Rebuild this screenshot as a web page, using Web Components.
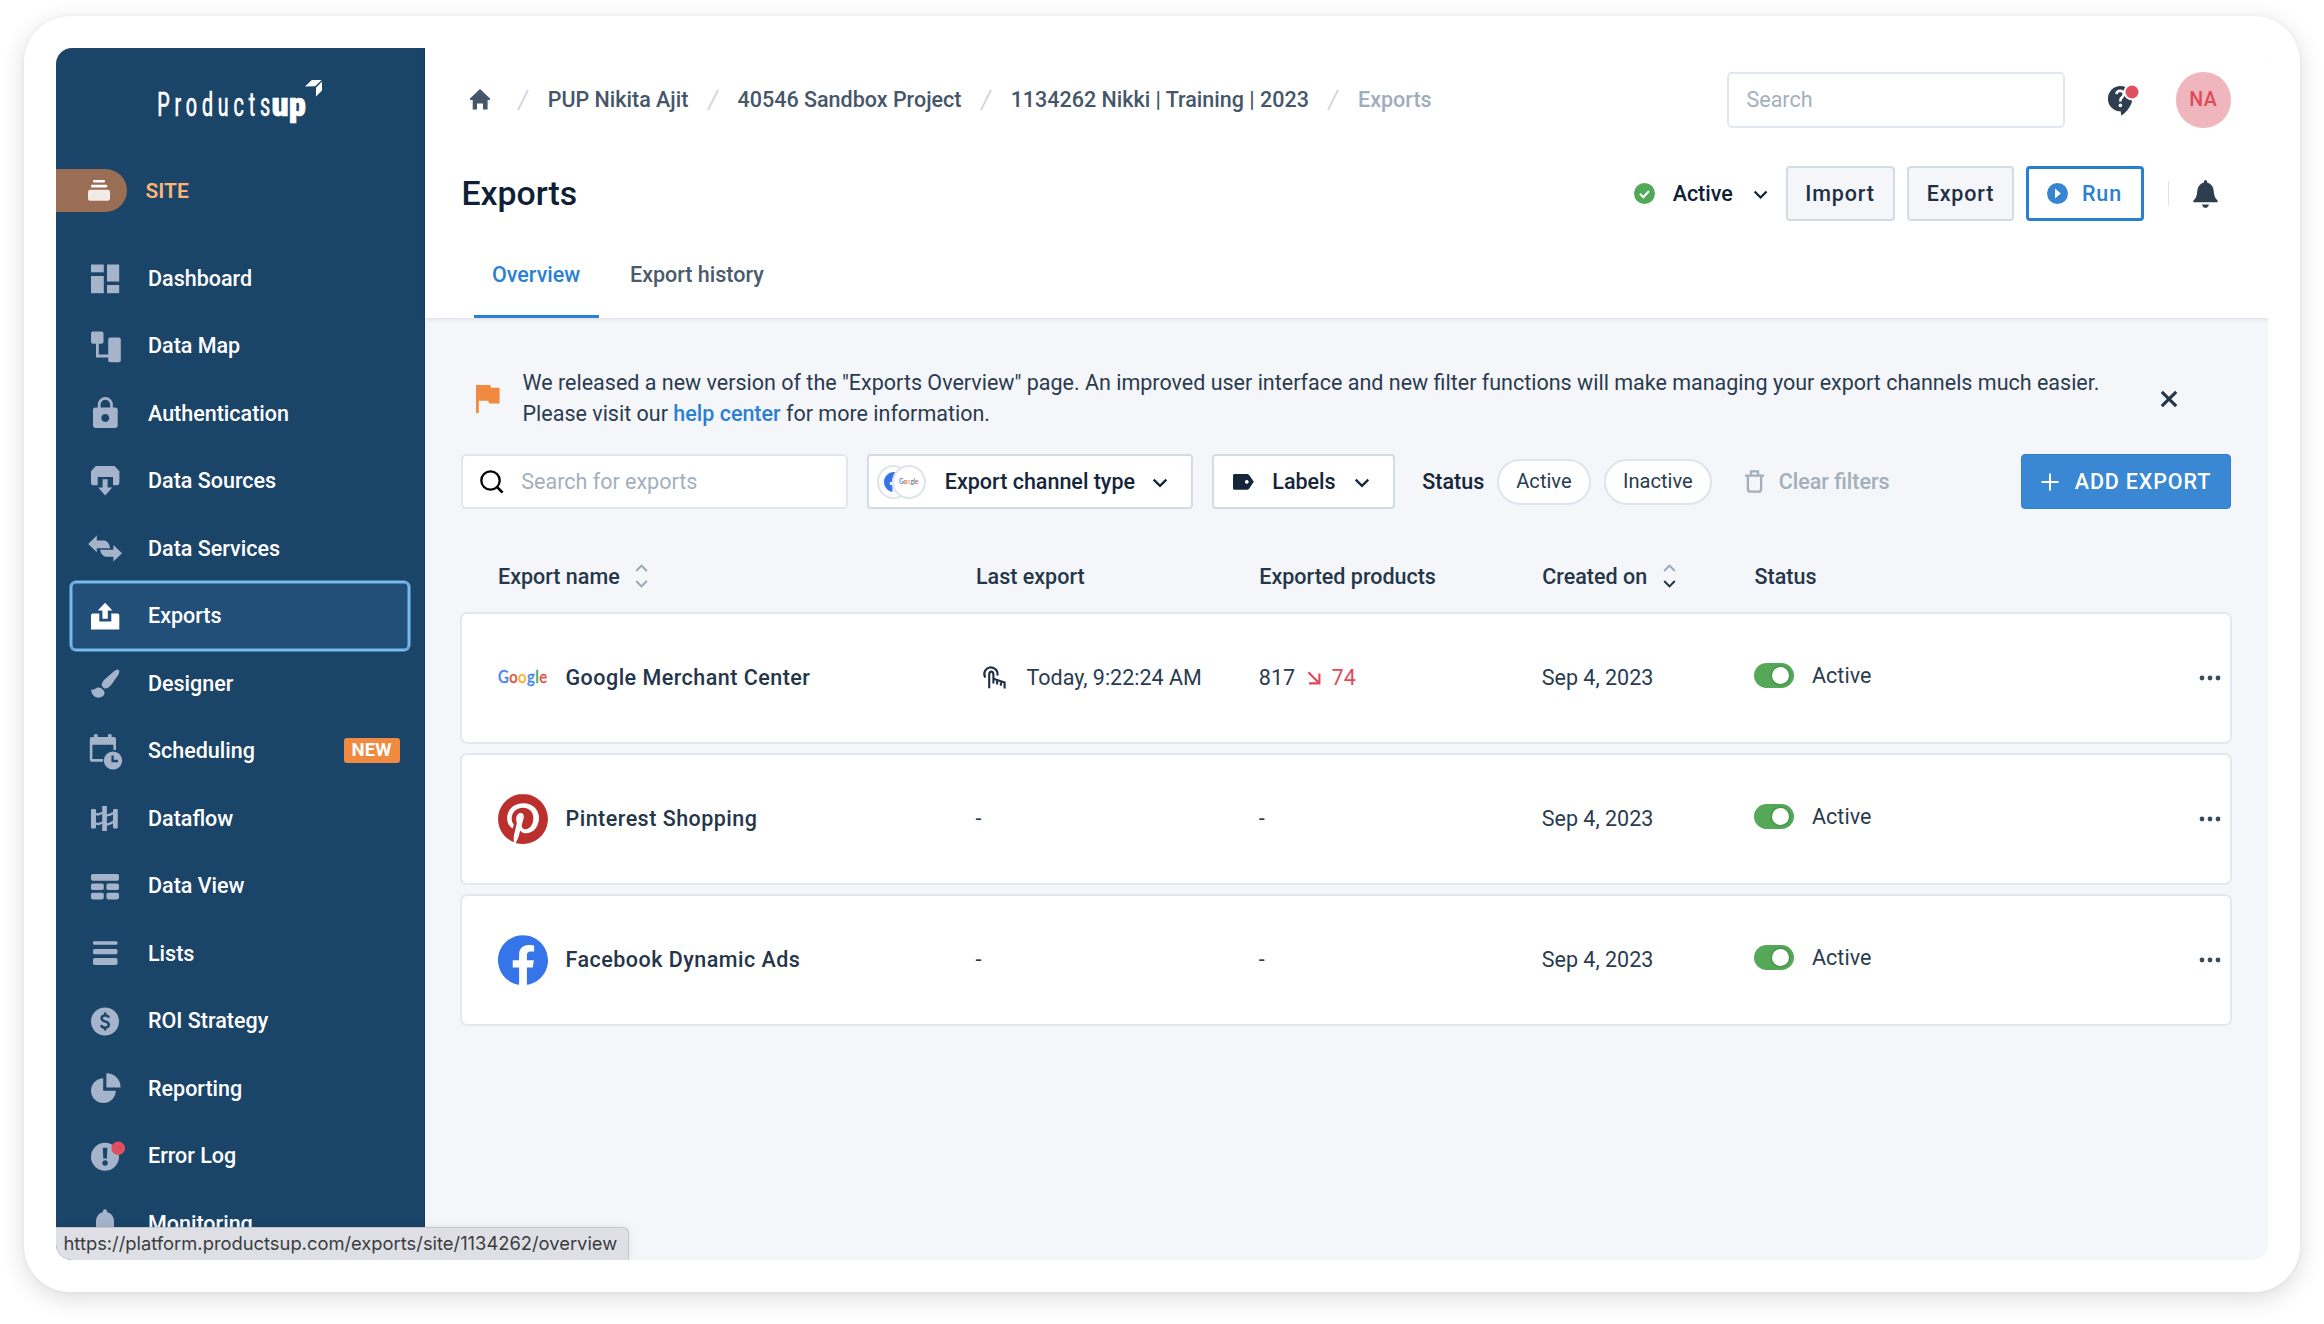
<!DOCTYPE html>
<html lang="en">
<head>
<meta charset="utf-8">
<title>Exports</title>
<style>
  html, body { margin: 0; width: 2324px; height: 1324px; overflow: hidden; background: #fff; }
  body { font: 400 21.5px/31px Roboto, "Liberation Sans", sans-serif; color: #2a3b4f; }
</style>
</head>
<body>
<pu-window></pu-window>

<script>
/* Base class: renders a template string into an open shadow root. */
class PuElement extends HTMLElement {
  connectedCallback() {
    if (this.shadowRoot) return;
    this.attachShadow({ mode: 'open' });
    this.shadowRoot.innerHTML =
      '<style>:host,*{box-sizing:border-box}svg{display:block;flex:none}' + this.css() + '</style>' + this.html();
  }
  css() { return ''; }
  html() { return '<slot></slot>'; }
}

/* Icon set: [width, height, viewBox, markup] */
const ICONS = {
  dashboard: [36, 36, '0 0 36 36', '<rect x="4" y="4.5" width="12.8" height="7.8"/><rect x="4" y="16" width="12.8" height="17.2"/><rect x="20" y="4.5" width="12.2" height="17"/><rect x="20" y="25" width="12.2" height="8.2"/>'],
  map: [36, 36, '0 0 36 36', '<rect x="4" y="3.5" width="12.5" height="12.3" rx="2"/><rect x="21.2" y="9.5" width="12.6" height="24.7" rx="2"/><path d="M10.4 15V28H22" fill="none" stroke="currentColor" stroke-width="2.8"/>'],
  lock: [36, 36, '0 0 36 36', '<path fill-rule="evenodd" d="M8.5 12.5H28.2Q30.7 12.5 30.7 15V30.6Q30.7 33 28.2 33H8.5Q6 33 6 30.6V15Q6 12.5 8.5 12.5ZM18.3 19a4 4 0 1 0 .01 0Z"/><path d="M12.2 13.5V9.6a6.1 6.1 0 0 1 12.3 0V13.5" fill="none" stroke="currentColor" stroke-width="2.7"/>'],
  sources: [36, 36, '0 0 36 36', '<path d="M8.8 3H27.6L32.4 8.3V20Q32.4 21.8 30.5 22.2H26V14H10.7V22.2H6Q4 21.8 4 20V8.3Z"/><path d="M15.6 16.3H20.6V24.6H25.2L18.2 32.6L11.2 24.6H15.6Z"/>'],
  services: [36, 36, '0 0 36 36', '<path d="M1.2 14 9.8 5.6V10.4H17Q21.5 10.6 23.3 18.2H9.8V22.2Z"/><path d="M35 23.2 26.4 31.6V26.8H19.5Q14.5 26.4 13 19.8H26.4V15Z"/>'],
  exports: [36, 36, '0 0 36 36', '<path d="M4 31.6V17.3Q4 15.6 5.8 15.6H12.3V23.6H24.3V15.6H30.6Q32.3 15.6 32.3 17.3V31.6Z"/><path d="M15.4 20.8V12.6H10.8L18.1 4.8 25.4 12.6H20.8V20.8Z"/>'],
  brush: [36, 36, '0 0 36 36', '<path d="M27 6.2Q30.5 3.8 31.8 5 33 6.3 31.2 10L24 20.2Q21 23.6 17.6 23.4 14.8 22.4 14.8 19.3 15 17 17 14.9Z"/><path d="M4 24.6Q6.6 25.3 8.2 23.8 11 21.5 14.2 23.3 17.6 25.6 17.6 28.6 16.6 32.6 11 32.8 5 32.4 4 24.6Z"/>'],
  schedule: [36, 38, '0 0 36 38', '<path fill-rule="evenodd" d="M7 3V2.3H10.6V5H21V2.3H24.6V5H27Q29 5 29 7V18H26.4V12.8H5.4V27H16V29.8H5Q2.8 29.8 2.8 27.4V7.4Q2.8 5 5 5H7Z"/><circle cx="26" cy="28.5" r="9.1"/><path d="M25.6 23.6V29H31" fill="none" stroke="#1b4469" stroke-width="2.3"/>'],
  flow: [36, 36, '0 0 36 36', '<rect x="4" y="9" width="5" height="19.4" rx="1.2"/><rect x="15.2" y="6" width="4.7" height="25"/><rect x="26" y="9" width="4.8" height="19.4" rx="1.2"/><path d="M8.5 13.8 11 14.5 15.5 12.8M19.5 15.5 23 14.6 26.5 13M8.5 23.5 11.5 24 15.5 22.4M19.5 24.6 23 23.6 26.5 21.8" fill="none" stroke="currentColor" stroke-width="2.2"/>'],
  view: [36, 36, '0 0 36 36', '<rect x="4" y="6" width="28" height="6.7" rx="1.8"/><rect x="4" y="15.4" width="12.8" height="6.6" rx="1.8"/><rect x="19.4" y="15.4" width="12.6" height="6.6" rx="1.8"/><rect x="4" y="24.8" width="12.8" height="6.6" rx="1.8"/><rect x="19.4" y="24.8" width="12.6" height="6.6" rx="1.8"/>'],
  lists: [36, 36, '0 0 36 36', '<rect x="6" y="6.3" width="24.5" height="3.4" rx="1.2"/><rect x="6" y="14" width="24.5" height="5.2" rx="1.6"/><rect x="6" y="23" width="24.5" height="7" rx="1.8"/>'],
  roi: [36, 36, '0 0 36 36', '<circle cx="18" cy="18.5" r="14"/><path d="M21.8 14.6Q21.2 12.4 18.1 12.4 14.7 12.6 14.6 15.3 14.8 17.6 18.1 18.4 21.8 19.3 21.8 21.9 21.5 24.6 18.1 24.8 14.6 24.6 14.2 22M18.1 9.6V12.6M18.1 24.6V27.6" fill="none" stroke="#1b4469" stroke-width="2.4"/>'],
  pie: [36, 36, '0 0 36 36', '<path d="M16.2 8.3A12.4 12.4 0 1 0 28.8 20.8H16.2Z"/><path d="M19.4 3.3A14 14 0 0 1 33.6 17.4H19.4Z"/>'],
  error: [40, 36, '0 0 40 36', '<circle cx="18" cy="18.8" r="14"/><path d="M15.8 9.8H20.4L19.9 20.6H16.3Z" fill="#1b4469"/><circle cx="18.1" cy="25" r="2.7" fill="#1b4469"/><circle cx="31.2" cy="10.3" r="6.8" fill="#e04f5f"/>'],
  alarm: [36, 36, '0 0 36 36', '<path d="M16 5.5Q18 3 20 5.5V7Q26.6 9 27 16V25L30 29V31H6V29L9 25V16Q9.4 9 16 7Z"/>'],
  home: [20, 21, '0 0 20 21', '<path d="M10 0 20 9.6V11H17.6V20.6H13V14.6H7V20.6H2.7V11H0V9.6Z"/>'],
  slash: [12, 22, '0 0 12 22', '<path d="M1 21 11 1" stroke="currentColor" stroke-width="1.8" fill="none"/>'],
  check: [21, 21, '0 0 21 21', '<circle cx="10.5" cy="10.5" r="10.5"/><path d="M6 10.8 9.4 14.2 15 8" stroke="#fff" stroke-width="2.1" fill="none"/>'],
  chevron: [16, 10, '0 0 16 10', '<path d="M1.7 1.6 8 7.9 14.3 1.6" stroke="currentColor" stroke-width="2.3" fill="none"/>'],
  play: [21, 21, '0 0 21 21', '<circle cx="10.5" cy="10.5" r="10.5"/><path d="M8 5.6 13.8 10.5 8 15.4Z" fill="#fff"/>'],
  bell: [25, 28, '0 0 25 28', '<path d="M12.5 0Q14.4.4 14.2 2.6 20.4 4.4 20.8 11.5 21 17.6 24.6 20.4V22.3H.4V20.4Q4 17.6 4.2 11.5 4.6 4.4 10.8 2.6 10.6.4 12.5 0ZM9 24.4H16Q15 27.8 12.5 27.8 10 27.8 9 24.4Z"/>'],
  help: [34, 34, '0 0 34 34', '<path d="M13.5 3A12.6 12.6 0 0 0 13.6 28.3L14.4 32.8Q22 27 24.6 20 25.6 17 24.8 14.5L13.5 3Z"/><path d="M13.5 3Q17 2.8 20 5L25 15 15 12Z"/><path d="M9.4 11.2Q9.8 7.8 13.2 7.8 16.8 8 16.8 11 16.8 12.8 15 14.4 13.4 15.6 13.4 17.6V18.4" fill="none" stroke="#fff" stroke-width="2.6"/><circle cx="13.4" cy="22.4" r="1.8" fill="#fff"/><circle cx="25" cy="9" r="8.4" fill="#fff"/><circle cx="25" cy="9" r="6.5" fill="#e04f5f"/>'],
  flag: [24, 28, '0 0 24 28', '<path d="M0 0H14.3L15 2.8H23.6V18.6H13L12.3 15.8H2.8V28H0Z"/>'],
  close: [18, 18, '0 0 18 18', '<path d="M1.8 1.8 16.2 16.2M16.2 1.8 1.8 16.2" stroke="currentColor" stroke-width="3.1"/>'],
  search: [24, 24, '0 0 24 24', '<circle cx="10.5" cy="10.5" r="9.2" fill="none" stroke="currentColor" stroke-width="2.3"/><path d="M17 17 22.6 22.6" stroke="currentColor" stroke-width="2.6"/>'],
  tag: [21, 16, '0 0 21 16', '<path fill-rule="evenodd" d="M1.5 0H13.8Q15.4 0 16.3 1.2L20.8 7.8 16.3 14.5Q15.4 15.7 13.8 15.7H1.5Q0 15.7 0 14.2V1.5Q0 0 1.5 0ZM13.8 6a1.9 1.9 0 1 0 .01 0Z"/>'],
  trash: [19, 23, '0 0 19 23', '<path d="M6 4.4V1.3H13V4.4M0 5.6H19M2.9 6V18.6Q3 21.7 5.4 21.7H13.6Q16 21.7 16.1 18.6V6" fill="none" stroke="currentColor" stroke-width="2.3"/>'],
  plus: [18, 18, '0 0 18 18', '<path d="M9 .5V17.5M.5 9H17.5" stroke="currentColor" stroke-width="2"/>'],
  touch: [24, 23, '0 0 24 23', '<path d="M2.3 11.5A6.6 6.6 0 1 1 14.3 9.6M6.2 22.2V8.3Q6.4 5.6 8.3 5.6 10.2 5.6 10.4 8.3V15.2M10.4 17.5V12.8L21.6 16.4V22.6M14.1 18.6V14.2M17.9 19.8V15.4" fill="none" stroke="currentColor" stroke-width="2.1"/>'],
  down: [14, 14, '0 0 14 14', '<path d="M1.4 1.2 12 12M12.4 2.4V12.4H2" fill="none" stroke="currentColor" stroke-width="2.1"/>'],
  dots: [22, 6, '0 0 22 6', '<circle cx="3" cy="3" r="2.4"/><circle cx="11" cy="3" r="2.4"/><circle cx="19" cy="3" r="2.4"/>'],
  facebook: [50, 50, '0 0 24 24', '<circle cx="12" cy="12" r="11.2" fill="#fff"/><path fill="#3674e9" d="M24 12.073c0-6.627-5.373-12-12-12s-12 5.373-12 12c0 5.99 4.388 10.954 10.125 11.854v-8.385H7.078v-3.47h3.047V9.43c0-3.007 1.792-4.669 4.533-4.669 1.312 0 2.686.235 2.686.235v2.953H15.83c-1.491 0-1.956.925-1.956 1.874v2.25h3.328l-.532 3.47h-2.796v8.385C19.612 23.027 24 18.062 24 12.073z"/>'],
  pinterest: [50, 50, '0 0 24 24', '<path fill="#bb302d" d="M12.017 0C5.396 0 .029 5.367.029 11.987c0 5.079 3.158 9.417 7.618 11.162-.105-.949-.199-2.403.041-3.439.219-.937 1.406-5.957 1.406-5.957s-.359-.72-.359-1.781c0-1.663.967-2.911 2.168-2.911 1.024 0 1.518.769 1.518 1.688 0 1.029-.653 2.567-.992 3.992-.285 1.193.6 2.165 1.775 2.165 2.128 0 3.768-2.245 3.768-5.487 0-2.861-2.063-4.869-5.008-4.869-3.41 0-5.409 2.562-5.409 5.199 0 1.033.394 2.143.889 2.741.099.12.112.225.085.345-.09.375-.293 1.199-.334 1.363-.053.225-.172.271-.401.165-1.495-.69-2.433-2.878-2.433-4.646 0-3.776 2.748-7.252 7.92-7.252 4.158 0 7.392 2.967 7.392 6.923 0 4.135-2.607 7.462-6.233 7.462-1.214 0-2.354-.629-2.758-1.379l-.749 2.848c-.269 1.045-1.004 2.352-1.498 3.146 1.123.345 2.306.535 3.55.535 6.607 0 11.985-5.365 11.985-11.987C23.97 5.39 18.592.026 11.985.026z"/>'],
  google: [50, 22, '0 0 50 22', '<text x="0" y="16" textLength="49.5" lengthAdjust="spacingAndGlyphs" font-family="Lato, Roboto, sans-serif" font-size="16.8" stroke-width=".35"><tspan fill="#4684ee" stroke="#4684ee">G</tspan><tspan fill="#e2513f" stroke="#e2513f">o</tspan><tspan fill="#f3b62b" stroke="#f3b62b">o</tspan><tspan fill="#4684ee" stroke="#4684ee">g</tspan><tspan fill="#3aa657" stroke="#3aa657">l</tspan><tspan fill="#e2513f" stroke="#e2513f">e</tspan></text>'],
  site: [22, 21, '0 0 22 21', '<rect x="5" y="0" width="12" height="2.4" rx=".8"/><rect x="3" y="4.8" width="16.2" height="2.6" rx=".8"/><rect x="0" y="9.8" width="22" height="11" rx="2.2" opacity=".86"/>']
};

class PuIcon extends PuElement {
  css() { return ':host{display:block;flex:none}svg{overflow:visible}'; }
  html() {
    const [w, h, box, body] = ICONS[this.getAttribute('name')];
    const k = parseFloat(this.getAttribute('scale') || 1);
    return `<svg width="${w * k}" height="${h * k}" viewBox="${box}" fill="currentColor">${body}</svg>`;
  }
}
customElements.define('pu-icon', PuIcon);

/* Productsup wordmark with the folded arrow over the last letter. */
class PuLogo extends PuElement {
  css() { return ':host{display:block}'; }
  html() {
    return `<svg width="166" height="46" viewBox="0 0 166 46" fill="#fff" font-family="Roboto Condensed, Open Sans Condensed, sans-serif">
      <text transform="translate(-1 37) scale(.7 1)" font-size="33.5" font-weight="400" textLength="162" lengthAdjust="spacing" stroke="#fff" stroke-width=".4">Products</text>
      <text transform="translate(113.5 37) scale(.98 1)" font-size="33" font-weight="900" textLength="35" lengthAdjust="spacingAndGlyphs" stroke="#fff" stroke-width=".6">up</text>
      <path d="M147 7.6 153.8 1H163.6L157.2 7.2Z"/><path d="M158 8.8 164 2.6V11.6L158 17.6Z"/>
    </svg>`;
  }
}
customElements.define('pu-logo', PuLogo);

class PuNavItem extends PuElement {
  css() {
    return `:host{display:flex;align-items:center;height:67.5px;padding-left:15.5px;font-weight:500;color:#fff;border-radius:5px}
      :host([active]){background:#214f78;box-shadow:0 0 0 1.5px #77baec,inset 0 0 0 1.5px #77baec}
      .icon{width:61.5px;flex:none;color:#a5b4cb}
      :host([active]) .icon{color:#fff}
      .badge{margin:0 9.5px 0 auto;width:56px;height:25px;border-radius:3px;background:#f08a40;font:700 18.6px/25px Roboto,sans-serif;text-align:center}`;
  }
  html() {
    const b = this.getAttribute('badge');
    return `<div class="icon"><pu-icon name="${this.getAttribute('icon')}"></pu-icon></div><slot></slot>${b ? `<span class="badge">${b}</span>` : ''}`;
  }
}
customElements.define('pu-nav-item', PuNavItem);

class PuSidebar extends PuElement {
  css() {
    return `:host{display:flex;flex-direction:column;width:369px;flex:none;background:#1b4469;overflow:hidden;border-right:1px solid #123a60}
      pu-logo{margin:31px 0 0 102px}
      .site{display:flex;align-items:center;margin-top:44px;height:43px;font-weight:600;font-size:21px;color:#fbb574}
      .pill{display:flex;align-items:center;width:71px;height:43px;padding-left:32px;margin-right:18.5px;border-radius:0 22px 22px 0;background:#9a6e55;color:#fff}
      .label{padding-top:1px}
      nav{display:flex;flex-direction:column;flex:none;margin:32.7px 15px 0 15px}`;
  }
  html() {
    const items = [['dashboard', 'Dashboard'], ['map', 'Data Map'], ['lock', 'Authentication'], ['sources', 'Data Sources'],
      ['services', 'Data Services'], ['exports', 'Exports', 'active'], ['brush', 'Designer'], ['schedule', 'Scheduling', 'badge="NEW"'],
      ['flow', 'Dataflow'], ['view', 'Data View'], ['lists', 'Lists'], ['roi', 'ROI Strategy'], ['pie', 'Reporting'],
      ['error', 'Error Log'], ['alarm', 'Monitoring']];
    return `<pu-logo></pu-logo>
      <div class="site"><div class="pill"><pu-icon name="site"></pu-icon></div><span class="label">SITE</span></div>
      <nav>${items.map(([i, t, a]) => `<pu-nav-item icon="${i}" ${a || ''}>${t}</pu-nav-item>`).join('')}</nav>`;
  }
}
customElements.define('pu-sidebar', PuSidebar);

class PuButton extends PuElement {
  css() {
    return `:host{display:flex;align-items:center;justify-content:center;height:55.5px;flex:none;border-radius:4px;border:2px solid #d3dbe4;
        background:#f4f6fa;font-weight:500;letter-spacing:.85px;color:#1f3044}
      :host([kind=outline]){border:3px solid #277fd3;background:#fff;color:#2b80d2}
      :host([kind=primary]){height:55px;border:1px solid #2f7fd0;background:#3a87d3;color:#fff}`;
  }
}
customElements.define('pu-button', PuButton);

class PuBreadcrumb extends PuElement {
  css() {
    return `:host{display:flex;align-items:center;font-weight:500;color:#46566a;white-space:nowrap}
      .home{margin-right:8.5px}.sep{margin:0 18.6px;color:#cfd7e2}.last{color:#a0adbd}`;
  }
  html() {
    const parts = this.getAttribute('path').split(' > ');
    return '<pu-icon class="home" name="home"></pu-icon>' + parts.map((p, i) =>
      `<pu-icon class="sep" name="slash"></pu-icon><span class="${i === parts.length - 1 ? 'last' : ''}">${p}</span>`).join('');
  }
}
customElements.define('pu-breadcrumb', PuBreadcrumb);

class PuHeader extends PuElement {
  css() {
    return `:host{display:flex;flex-direction:column;height:270px;flex:none;background:#fff;border-bottom:0;box-shadow:0 1px 4px rgba(40,60,90,.14);position:relative;z-index:1}
      .top{display:flex;align-items:center;margin:24px 37px 0 45px;height:56px}
      pu-breadcrumb{margin-top:-1px}
      .search{width:338px;height:55.5px;margin-left:auto;border:2px solid #e2e7ee;border-radius:5px;padding:10px 18px;color:#a3afbe}
      .help{margin:0 0 0 42px;color:#2e3e50}
      .avatar{width:55.5px;height:55.5px;margin-left:35px;border-radius:50%;background:#f0b6bd;color:#e04a58;font:500 19.6px/56px Roboto,sans-serif;text-align:center;letter-spacing:.5px}
      .row{display:flex;align-items:center;margin:37.5px 50px 0 36.5px;height:56px}
      h1{margin:0 auto 0 0;font:500 33.8px/40px Roboto,sans-serif;color:#0f2036}
      .state{display:flex;align-items:center;font-weight:500;color:#0f2036}
      .tabs{display:flex;gap:13px;margin:25px 0 0 49px;font-weight:500;color:#4b5a6c}
      .tabs span{height:71.5px;padding:12px 18px 0;border-bottom:3px solid transparent}
      .tabs .on{width:125px;color:#2b80d2;border-color:#2b80d2}`;
  }
  html() {
    return `<div class="top">
        <pu-breadcrumb path="PUP Nikita Ajit > 40546 Sandbox Project > 1134262 Nikki | Training | 2023 > Exports"></pu-breadcrumb>
        <div class="search">Search</div><pu-icon class="help" name="help"></pu-icon><div class="avatar">NA</div>
      </div>
      <div class="row"><h1>Exports</h1>
        <div class="state"><pu-icon name="check" style="color:#51a957;margin-right:17.5px"></pu-icon>Active<pu-icon name="chevron" style="margin:3px 17.5px 0 20px" scale=".95"></pu-icon></div>
        <pu-button style="width:109px;margin-right:12.5px">Import</pu-button>
        <pu-button style="width:107px;margin-right:12px">Export</pu-button>
        <pu-button kind="outline" style="width:117.5px"><pu-icon name="play" style="color:#3585d2;margin-right:13.5px"></pu-icon>Run</pu-button>
        <div style="width:1.5px;height:25px;margin:0 24px 0 24px;background:#dde3ea"></div>
        <pu-icon name="bell" style="color:#2e3e50"></pu-icon>
      </div>
      <div class="tabs"><span class="on">Overview</span><span>Export history</span></div>`;
  }
}
customElements.define('pu-header', PuHeader);

class PuNotice extends PuElement {
  css() {
    return `:host{display:flex;align-items:center;height:62px}
      .flag{color:#f08a40;margin:1px 23px 0 14.5px}p{margin:0;flex:1;white-space:nowrap}
      .x{color:#25364a;margin:1px 54px 0 0}`;
  }
  html() { return '<pu-icon class="flag" name="flag"></pu-icon><p><slot></slot></p><pu-icon class="x" name="close"></pu-icon>'; }
}
customElements.define('pu-notice', PuNotice);

class PuSelect extends PuElement {
  css() {
    return `:host{display:flex;align-items:center;height:55px;flex:none;border:2px solid #d3dbe4;border-radius:4px;background:#fff;font-weight:500;color:#15263b}
      .chev{margin:2px 23px 0 auto}`;
  }
  html() { return '<slot></slot><pu-icon class="chev" name="chevron"></pu-icon>'; }
}
customElements.define('pu-select', PuSelect);

/* Two overlapping round channel thumbnails. */
class PuChannels extends PuElement {
  css() {
    return `:host{display:flex}div{display:flex;align-items:center;justify-content:center;width:33.5px;height:34px;border:2px solid #dfe4ec;border-radius:50%;background:#fff}
      div+div{margin-left:-18px}`;
  }
  html() { return '<div><pu-icon name="facebook" scale=".4"></pu-icon></div><div><pu-icon name="google" scale=".39"></pu-icon></div>'; }
}
customElements.define('pu-channels', PuChannels);

class PuChip extends PuElement {
  css() { return ':host{display:flex;align-items:center;justify-content:center;flex:none;height:46px;border:2px solid #dfe4ec;border-radius:23px;background:#fff;font-size:20.1px}'; }
}
customElements.define('pu-chip', PuChip);

class PuFilters extends PuElement {
  css() {
    return `:host{display:flex;align-items:center;height:55px;white-space:nowrap}
      .search{display:flex;align-items:center;width:387px;height:55px;border:2px solid #e2e7ee;border-radius:5px;background:#fff;color:#a3afbe;padding-left:16.5px}
      .clear{display:flex;align-items:center;margin-left:32.5px;color:#a3afba;font-weight:500}
      .st{margin:0 12.7px 0 27px;font-weight:500;color:#15263b}`;
  }
  html() {
    return `<div class="search"><pu-icon name="search" style="color:#000;margin-right:17.5px"></pu-icon>Search for exports</div>
      <pu-select style="width:326.5px;margin-left:18.5px;"><pu-channels style="margin:0 19px 0 8px"></pu-channels>Export channel type</pu-select>
      <pu-select style="width:183.5px;margin-left:18.5px"><pu-icon name="tag" style="margin:0 18px 0 19.5px"></pu-icon>Labels</pu-select>
      <span class="st">Status</span>
      <pu-chip style="width:94px;margin-right:12.7px">Active</pu-chip><pu-chip style="width:108.5px">Inactive</pu-chip>
      <div class="clear"><pu-icon name="trash" style="margin-right:15px"></pu-icon>Clear filters</div>
      <pu-button kind="primary" style="width:210px;margin-left:auto"><pu-icon name="plus" style="margin-right:15.5px"></pu-icon>ADD EXPORT</pu-button>`;
  }
}
customElements.define('pu-filters', PuFilters);

class PuSort extends PuElement {
  css() { return ':host{display:block}'; }
  html() {
    const low = this.hasAttribute('desc') ? '#1f3044' : '#9ba8b6';
    return `<svg width="13" height="24" viewBox="0 0 13 24" fill="none" stroke-width="1.9"><path d="M1.2 7 6.5 1.6 11.8 7" stroke="#9ba8b6"/><path d="M1.2 17 6.5 22.4 11.8 17" stroke="${low}"/></svg>`;
  }
}
customElements.define('pu-sort', PuSort);

const COLS = 'grid-template-columns:478px 283.3px 283px 212.3px 1fr auto;align-items:center;';

class PuTableHead extends PuElement {
  css() { return `:host{display:grid;${COLS}height:40px;padding-left:37px;font-weight:500;color:#25364a}div{display:flex;align-items:center;gap:15.5px}`; }
  html() { return '<div>Export name<pu-sort></pu-sort></div><div>Last export</div><div>Exported products</div><div>Created on<pu-sort desc></pu-sort></div><div>Status</div>'; }
}
customElements.define('pu-table-head', PuTableHead);

class PuToggle extends PuElement {
  css() { return ':host{display:flex;justify-content:flex-end;align-items:center;width:40px;height:25px;padding-right:5.5px;border-radius:13px;background:#54a858}i{width:17px;height:17px;border-radius:50%;background:#fff;box-shadow:0 0 2px 1px rgba(30,120,40,.5)}'; }
  html() { return '<i></i>'; }
}
customElements.define('pu-toggle', PuToggle);

class PuExportRow extends PuElement {
  css() {
    return `:host{display:grid;${COLS}height:132px;padding:0 9px 1.5px 35.5px;border:2px solid #e3e8ef;border-radius:7px;background:#fff}
      div{display:flex;align-items:center}
      .name{font-weight:500;letter-spacing:.48px;color:#25364a;gap:18px}
      .trend{color:#e04a58;gap:11px;margin-left:11.5px}
      .status{gap:18px;margin-top:-4px}
      .menu{color:#3c4c5f}`;
  }
  html() {
    const a = n => this.getAttribute(n);
    return `<div class="name"><pu-icon name="${a('logo')}"></pu-icon><slot></slot></div>
      <div>${a('last') ? `<pu-icon name="touch" style="margin:0 20px 0 7px;color:#1f3044"></pu-icon>${a('last')}` : '-'}</div>
      <div>${a('count') ? `${a('count')}<div class="trend"><pu-icon name="down"></pu-icon>${a('drop')}</div>` : '-'}</div>
      <div>${a('created')}</div>
      <div class="status"><pu-toggle></pu-toggle>Active</div>
      <pu-icon class="menu" name="dots"></pu-icon>`;
  }
}
customElements.define('pu-export-row', PuExportRow);

class PuMain extends PuElement {
  css() {
    return `:host{display:flex;flex-direction:column;flex:1;min-width:0;background:#f4f6fa}
      .body{display:flex;flex-direction:column;padding:49.3px 36px 0 36px}
      pu-filters{margin:25px .8px 0 .3px}
      pu-table-head{margin-top:47px}
      .rows{display:flex;flex-direction:column;gap:9.1px;margin:16px 0 0 -1px}
      pu-notice b{font-weight:500;color:#2b80d2}`;
  }
  html() {
    return `<pu-header></pu-header>
      <div class="body">
        <pu-notice>We released a new version of the "Exports Overview" page. An improved user interface and new filter functions will make managing your export channels much easier.<br>Please visit our <b>help center</b> for more information.</pu-notice>
        <pu-filters></pu-filters>
        <pu-table-head></pu-table-head>
        <div class="rows">
          <pu-export-row logo="google" last="Today, 9:22:24 AM" count="817" drop="74" created="Sep 4, 2023">Google Merchant Center</pu-export-row>
          <pu-export-row logo="pinterest" created="Sep 4, 2023">Pinterest Shopping</pu-export-row>
          <pu-export-row logo="facebook" created="Sep 4, 2023">Facebook Dynamic Ads</pu-export-row>
        </div>
      </div>`;
  }
}
customElements.define('pu-main', PuMain);

class PuWindow extends PuElement {
  css() {
    return `:host{display:flex;width:2324px;height:1324px;padding:16px 24px 32.5px 24px}
      .card{flex:1;min-width:0;display:flex;padding:32px;border-radius:46px;background:#fff;box-shadow:0 6px 24px rgba(0,0,0,.14),0 0 4px rgba(0,0,0,.05)}
      .screen{flex:1;min-width:0;display:flex;position:relative;overflow:hidden;border-radius:16px;background:#fff}
      .link{position:absolute;left:0;bottom:0;width:573px;height:33px;padding-left:7.5px;background:#dfe0e5;border:solid #c4c6cc;border-width:1.5px 1.5px 0 0;
        border-radius:0 6px 0 0;font:400 18.35px/31px Inter,sans-serif;color:#3a3c40;white-space:nowrap;box-shadow:0 0 8px rgba(0,0,0,.08);z-index:2}`;
  }
  html() {
    return `<div class="card"><div class="screen"><pu-sidebar></pu-sidebar><pu-main></pu-main>
      <div class="link">https://platform.productsup.com/exports/site/1134262/overview</div></div></div>`;
  }
}
customElements.define('pu-window', PuWindow);
</script>
</body>
</html>
